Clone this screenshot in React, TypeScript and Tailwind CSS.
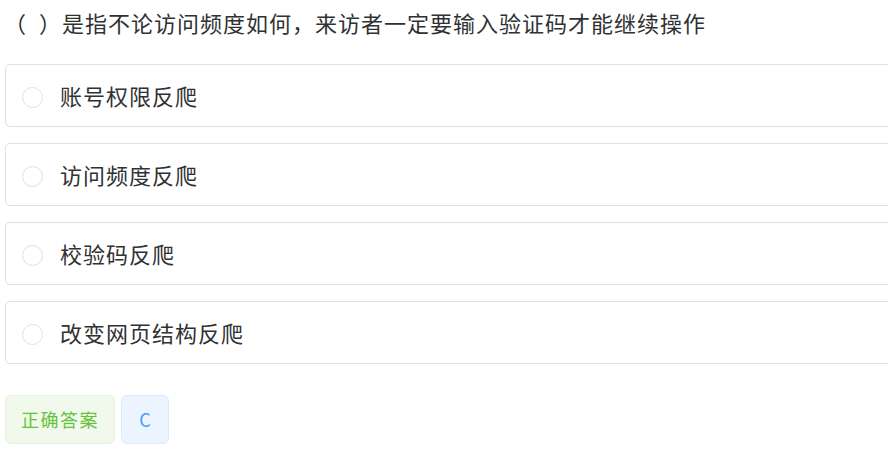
import React from "react";

const options = ["账号权限反爬", "访问频度反爬", "校验码反爬", "改变网页结构反爬"];

export default function App() {
  return (
    <div
      className="w-[888px] h-[455px] overflow-hidden bg-white text-[#303133]"
      style={{ fontFamily: '"Noto Sans CJK SC", "Noto Sans", sans-serif' }}
    >
      <div className="pl-[4px] pt-[6px] h-[64px] text-[22px] leading-[32px] tracking-[1px] [text-spacing-trim:space-all]">
        （<span className="inline-block w-[12px]"> </span>）是指不论访问频度如何，来访者一定要输入验证码才能继续操作
      </div>

      <div className="flex flex-col gap-[16px] pl-[5px] w-[920px]">
        {options.map((text) => (
          <Option key={text} text={text} />
        ))}
      </div>

      <div className="flex gap-[6px] pl-[5px] mt-[31px]">
        <button
          type="button"
          className="w-[110px] h-[49px] rounded-[6px] border border-[#e1f3d8] bg-[#f0f9eb] text-[#67c23a] text-[18px] tracking-[1.5px]"
        >
          正确答案
        </button>
        <button
          type="button"
          className="w-[48px] h-[49px] rounded-[6px] border border-[#d9ecff] bg-[#ecf5ff] text-[#409eff] text-[18px]"
        >
          C
        </button>
      </div>
    </div>
  );
}

function Option({ text }: { text: string }) {
  return (
    <div className="h-[63px] flex items-center rounded-[5px] border border-[#dcdfe6] pl-[16px]">
      <span className="w-[21px] h-[21px] mt-[4px] rounded-full border border-[#dcdfe6] shrink-0" />
      <span className="ml-[17px] text-[22px] tracking-[1px]">{text}</span>
    </div>
  );
}
